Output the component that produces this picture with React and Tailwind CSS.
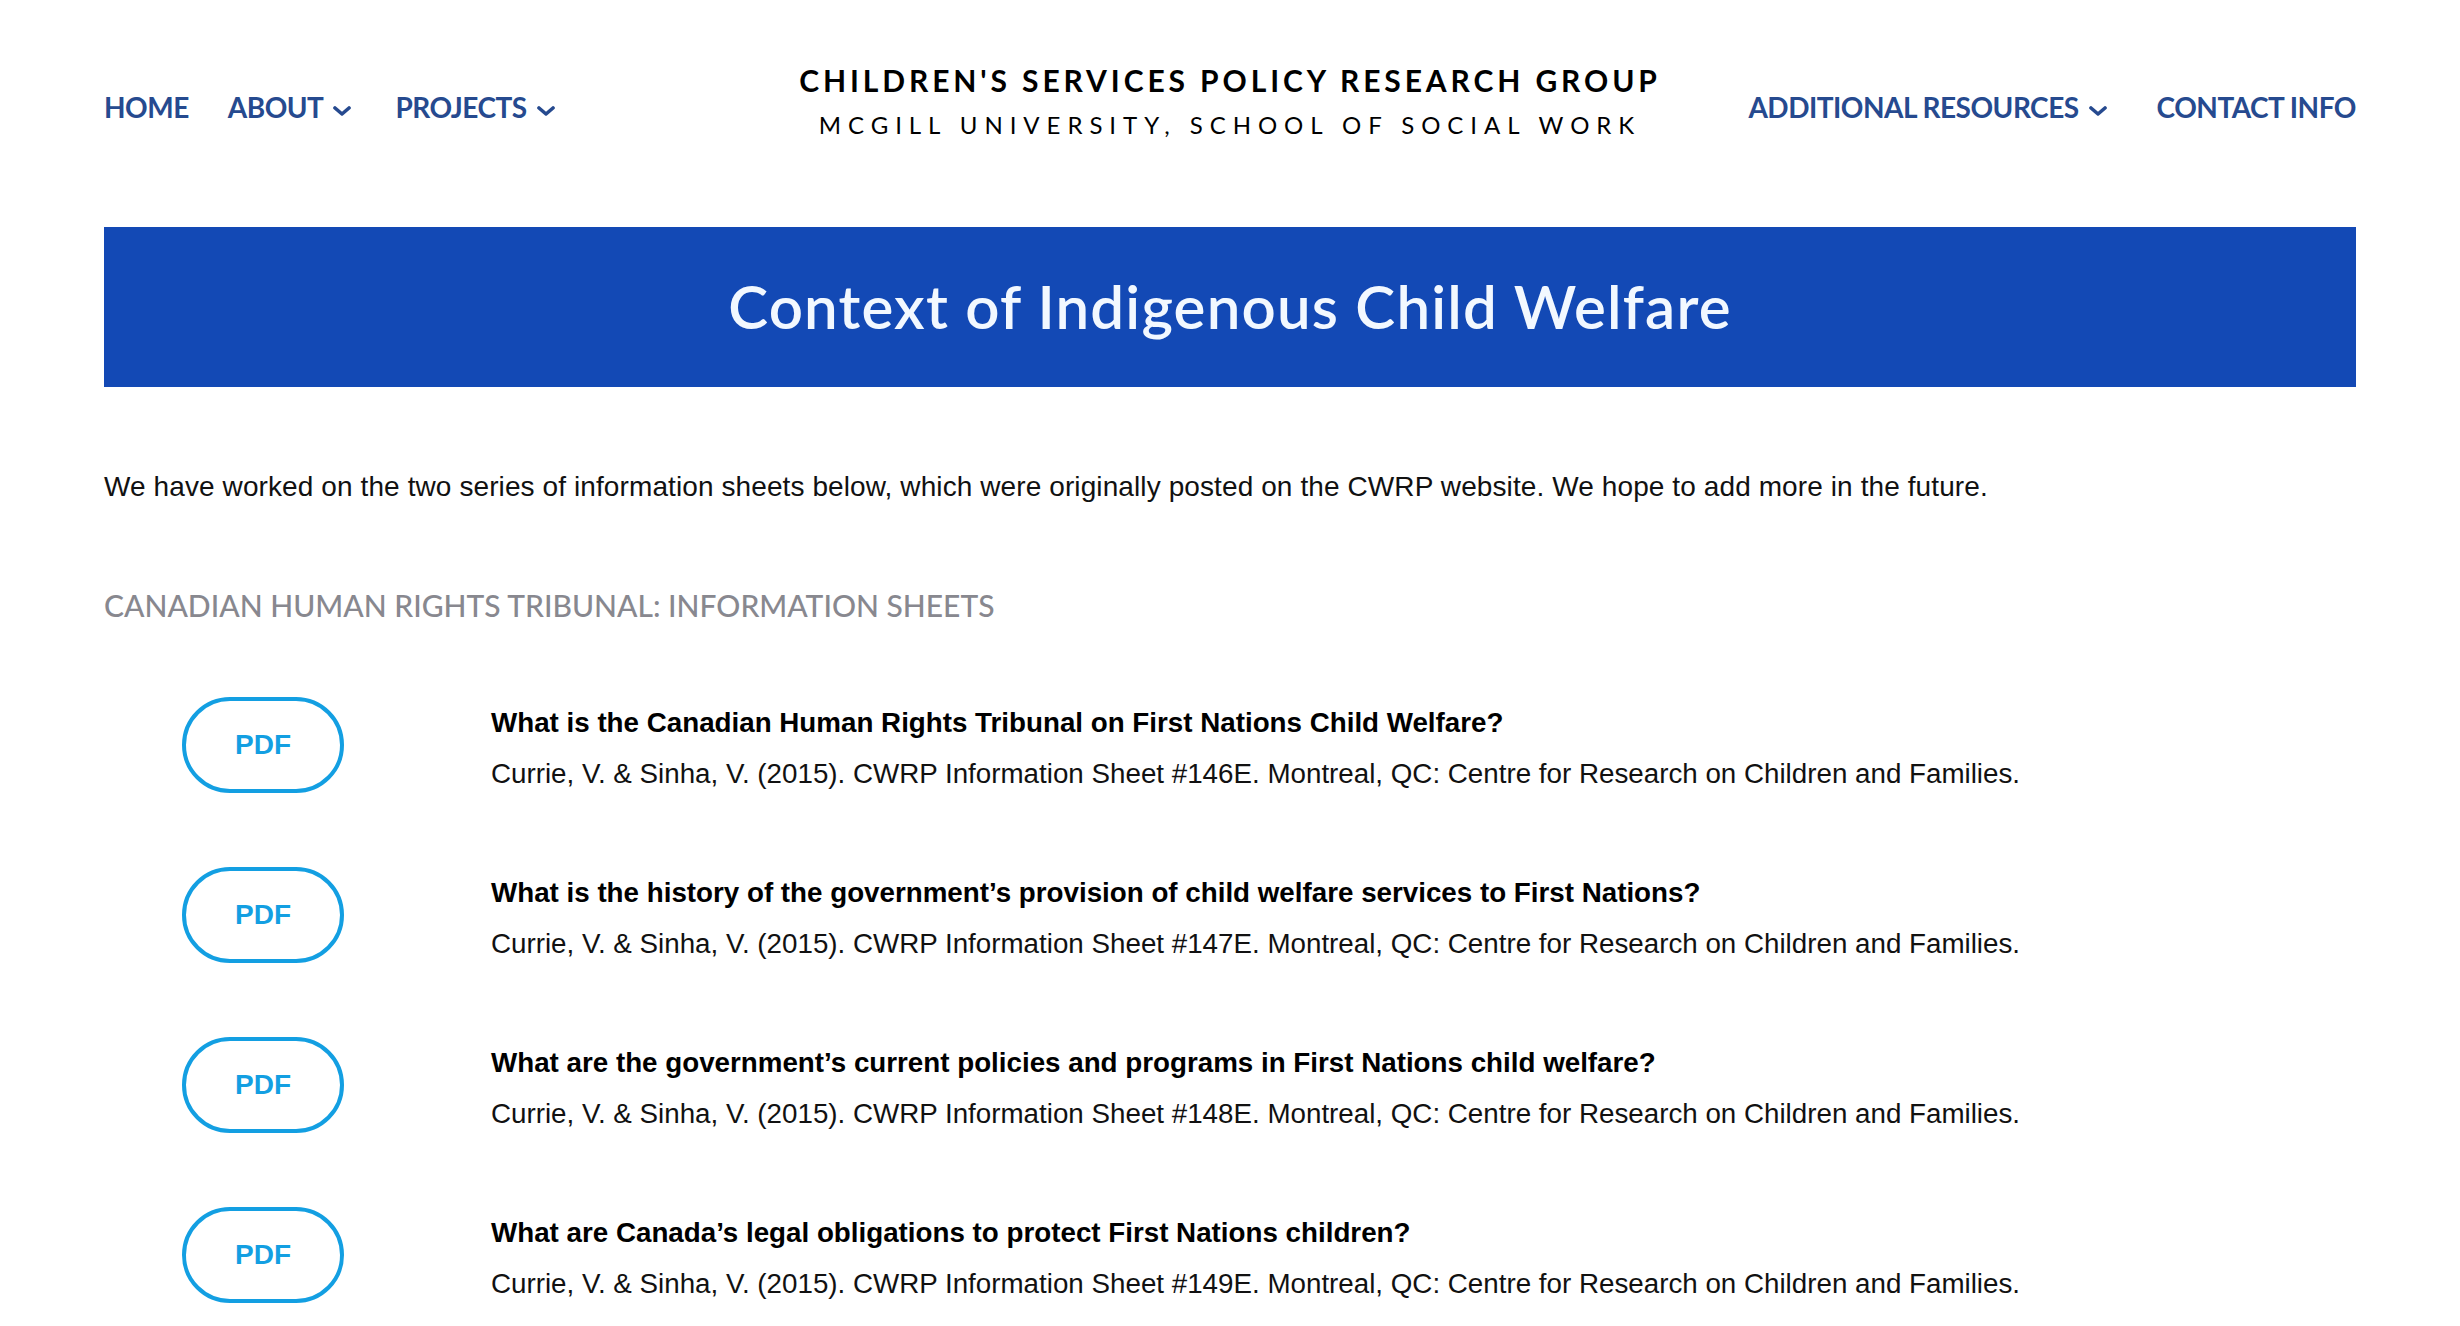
import { Fragment } from "react";

const navFont = { fontFamily: "Lato, 'Noto Sans', sans-serif" };

const sheets = [
    {
        title: "What is the Canadian Human Rights Tribunal on First Nations Child Welfare?",
        num: "146E",
    },
    {
        title: "What is the history of the government\u2019s provision of child welfare services to First Nations?",
        num: "147E",
    },
    {
        title: "What are the government\u2019s current policies and programs in First Nations child welfare?",
        num: "148E",
    },
    {
        title: "What are Canada\u2019s legal obligations to protect First Nations children?",
        num: "149E",
    },
];

function Chevron() {
    return (
        <svg width="18" height="11" viewBox="0 0 18 11" className="translate-y-[4px]">
            <polyline points="2,2 9,8 16,2" fill="none" stroke="currentColor" strokeWidth="3.6" strokeLinecap="round" strokeLinejoin="round" />
        </svg>
    );
}

function NavLink({ label, dropdown }) {
    return (
        <a href="#" className="flex items-center gap-[10px] text-[28px] leading-[40px] font-bold tracking-[-0.5px] text-[#264a8f] whitespace-nowrap">
            {label}
            {dropdown && <Chevron />}
        </a>
    );
}

export default function App() {
    return (
        <div className="min-h-[1326px] bg-white px-[104px] pb-[80px]" style={{ fontFamily: "'Liberation Sans', Arial, sans-serif" }}>
            {/* header */}
            <header className="grid grid-cols-[1fr_auto_1fr] items-start pt-[60px]" style={navFont}>
                <nav className="flex items-center mt-[27px]">
                    <NavLink label="HOME" />
                    <div className="ml-[39px]"><NavLink label="ABOUT" dropdown /></div>
                    <div className="ml-[44px]"><NavLink label="PROJECTS" dropdown /></div>
                </nav>
                <div className="flex flex-col items-center text-black">
                    <div className="text-[30px] leading-[40px] font-bold tracking-[0.13em] whitespace-nowrap">CHILDREN'S SERVICES POLICY RESEARCH GROUP</div>
                    <div className="mt-[5px] text-[24px] leading-[40px] font-normal tracking-[0.29em] whitespace-nowrap">MCGILL UNIVERSITY, SCHOOL OF SOCIAL WORK</div>
                </div>
                <nav className="flex items-center justify-end mt-[27px]">
                    <NavLink label="ADDITIONAL RESOURCES" dropdown />
                    <div className="ml-[50px]"><NavLink label="CONTACT INFO" /></div>
                </nav>
            </header>

            {/* banner */}
            <div className="mt-[82px] h-[160px] bg-[#1349b5] flex items-center justify-center">
                <h1 className="text-[60px] font-semibold tracking-[0.02em] text-[#f2f8ff] pb-[2px]" style={navFont}>Context of Indigenous Child Welfare</h1>
            </div>

            <p className="mt-[80px] text-[28px] leading-[40px] tracking-[0.1px] text-[#111]">
                We have worked on the two series of information sheets below, which were originally posted on the CWRP website. We hope to add more in the future.
            </p>

            <h2 className="mt-[78px] text-[30px] leading-[40px] text-[#88888f] font-medium" style={navFont}>
                CANADIAN HUMAN RIGHTS TRIBUNAL: INFORMATION SHEETS
            </h2>

            <div className="mt-[72px] flex flex-col gap-[74px]">
                {sheets.map((s) => (
                    <div key={s.num} className="flex items-center h-[96px] pl-[78px]">
                        <a href="#" className="w-[162px] h-[96px] shrink-0 rounded-full border-[4px] border-[#139fe2] flex items-center justify-center text-[28px] font-bold text-[#139fe2]">
                            PDF
                        </a>
                        <div className="ml-[147px] pt-[6px] text-[27.75px] leading-[40px] text-[#111]">
                            <div className="font-bold text-black">{s.title}</div>
                            <div className="mt-[11px]">Currie, V. &amp; Sinha, V. (2015). CWRP Information Sheet #{s.num}. Montreal, QC: Centre for Research on Children and Families.</div>
                        </div>
                    </div>
                ))}
            </div>
        </div>
    );
}
